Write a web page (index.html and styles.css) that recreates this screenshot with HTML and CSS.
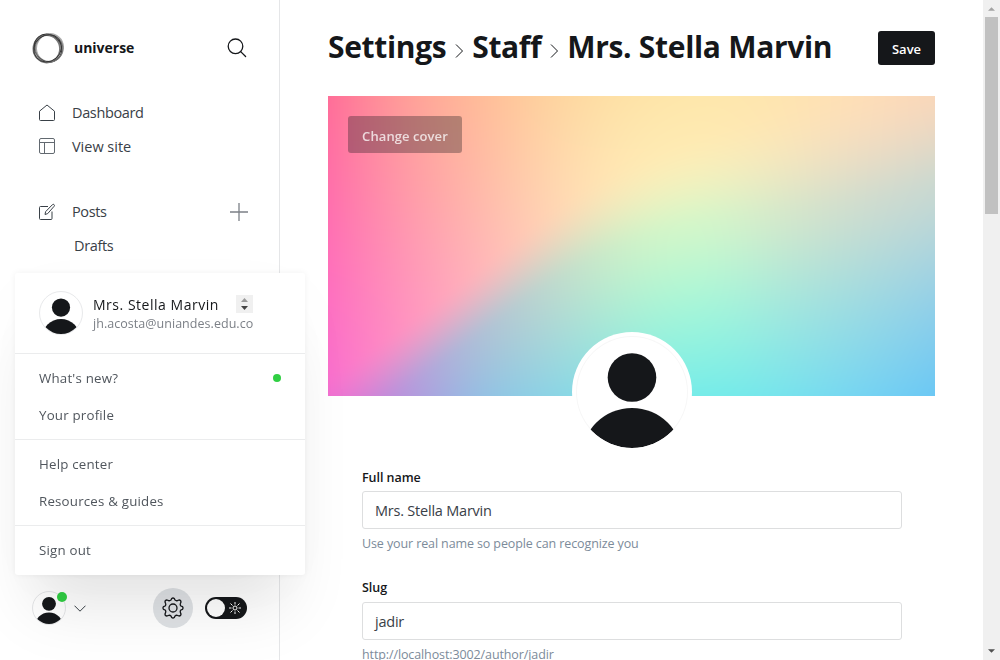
FILE: index.html
```html
<!DOCTYPE html>
<html lang="en">
<head>
<meta charset="utf-8">
<title>Settings - Staff</title>
<link rel="stylesheet" href="styles.css">
</head>
<body>
<svg class="defs" width="0" height="0" aria-hidden="true">
  <symbol id="person" viewBox="0 0 112 112">
    <clipPath id="disc"><circle cx="56" cy="56" r="56"/></clipPath>
    <circle cx="56" cy="41.500" r="24.300"/>
    <circle cx="56" cy="122.700" r="50.700" clip-path="url(#disc)"/>
  </symbol>
</svg>
<div class="app">
  <nav class="sidebar">
    <div class="brand">
      <svg class="logo" viewBox="0 0 32 32" fill="none">
        <ellipse cx="17.300" cy="15" rx="13.300" ry="14" stroke-width="1.800" stroke="#aaa" transform="rotate(30 16 16)"/>
        <ellipse cx="14.700" cy="16.800" rx="13.300" ry="13.700" stroke-width="1.800" stroke="#777"/>
        <ellipse cx="16" cy="16" rx="14.600" ry="13.100" stroke-width="1" stroke="#333" transform="rotate(50 16 16)"/>
        <ellipse cx="17" cy="16.500" rx="13.800" ry="13.700" stroke-width="1.100" stroke="#777"/>
        <ellipse cx="15.500" cy="16" rx="14.500" ry="13" stroke-width=".9" stroke="#333" transform="rotate(-40 16 16)"/>
      </svg>
      <span class="brand-name">universe</span>
      <svg class="search" viewBox="0 0 20 20" fill="none" stroke="#15171a" stroke-width="1.300" stroke-linecap="round"><circle cx="8.500" cy="8.300" r="7.300"/><path d="M13.700 13.600 18.600 18.500"/></svg>
    </div>
    <ul class="nav">
      <li><svg class="icon" viewBox="0 0 18 18"><path d="M1.500 7.200 9 1l7.500 6.200V15.500a1 1 0 0 1-1 1h-13a1 1 0 0 1-1-1z"/></svg><span class="t-dash">Dashboard</span></li>
      <li><svg class="icon gray" viewBox="0 0 18 18"><rect x="1.500" y="1.500" width="15" height="15" rx="1.500"/><path d="M1.500 5.500h15M6.500 5.500v11"/></svg><span class="t-view">View site</span></li>
    </ul>
    <ul class="nav posts">
      <li><svg class="icon" viewBox="0 0 18 18"><path d="M10 3.500H2.500a1 1 0 0 0-1 1v11a1 1 0 0 0 1 1h10.500a1 1 0 0 0 1-1V8.500M7 11.500l.6-2.800L14.400 1.700a1.100 1.100 0 0 1 1.700 1.600L9.700 10.600z"/></svg><span class="t-posts">Posts</span><svg class="plus" viewBox="0 0 18 18"><path d="M9 0v18M0 9h18"/></svg></li>
      <li class="sub"><span class="t-drafts">Drafts</span></li>
    </ul>
    <div class="bottom">
      <div class="mini"><svg class="avatar"><use href="#person"/></svg><i class="dot badge"></i></div>
      <svg class="caret" viewBox="0 0 12 7"><path d="M.5.700 6 6.200 11.500.700"/></svg>
      <div class="gear"><svg viewBox="0 0 22 22" fill="none" stroke="#15171a" stroke-width="1.300" stroke-linejoin="round"><circle cx="11" cy="11" r="4"/><path d="M9 3.100 9.700 1.500Q11 .5 12.300 1.500L13 3.100Q14.200 4.100 15.400 3.600L17 3Q18.900 3 19 5L18.400 6.600Q17.900 7.800 18.900 9L20.500 9.700Q21.500 11 20.500 12.300L18.900 13Q17.900 14.200 18.400 15.400L19 17Q19 18.900 17 19L15.400 18.400Q14.200 17.900 13 18.900L12.300 20.500Q11 21.500 9.700 20.500L9 18.900Q7.800 17.900 6.600 18.400L5 19Q3 19 3 17L3.600 15.400Q4.100 14.200 3.100 13L1.500 12.300Q.5 11 1.500 9.700L3.100 9Q4.100 7.800 3.600 6.600L3 5Q3 3 5 3L6.600 3.600Q7.800 4.100 9 3.100Z"/></svg></div>
      <div class="toggle"><i class="knob"></i><svg viewBox="0 0 12 12" fill="none" stroke="#fff" stroke-width="1"><circle cx="6" cy="6" r="2"/><path d="M6 0v2.500M6 9.500V12M0 6h2.500M9.500 6H12M1.500 1.500l2 2M8.500 8.500l2 2M1.500 10.500l2-2M8.500 3.500l2-2"/></svg></div>
    </div>
  </nav>
  <main class="main">
    <header class="head">
      <h1><span class="h-set">Settings</span><svg class="sep" viewBox="0 0 9 16"><path d="m1 1.500 6.500 6.500L1 14.500"/></svg><span class="h-staff">Staff</span><svg class="sep" viewBox="0 0 9 16"><path d="m1 1.500 6.500 6.500L1 14.500"/></svg><span class="h-name">Mrs. Stella Marvin</span></h1>
      <button class="save">Save</button>
    </header>
    <section class="cover">
      <canvas id="cover" width="607" height="300"></canvas>
      <button class="change"><span>Change cover</span></button>
      <div class="portrait"><svg><use href="#person"/></svg></div>
    </section>
    <form class="form">
      <label class="l-full">Full name</label>
      <div class="field"><span class="t-full">Mrs. Stella Marvin</span></div>
      <p class="h-full">Use your real name so people can recognize you</p>
      <label class="l-slug">Slug</label>
      <div class="field slug"><span class="t-slug">jadir</span></div>
      <p class="h-slug">http://localhost:3002/author/jadir</p>
    </form>
  </main>
  <div class="scrollbar"><svg class="arrow up" viewBox="0 0 8 4"><path d="M0 4h8L4 0z"/></svg><div class="thumb"></div><svg class="arrow down" viewBox="0 0 8 4"><path d="M0 0h8L4 4z"/></svg></div>
</div>
<div class="menu">
  <div class="who">
    <div class="ring"><svg><use href="#person"/></svg></div>
    <div class="id"><div class="name">Mrs. Stella Marvin</div><div class="mail">jh.acosta@uniandes.edu.co</div></div>
    <div class="spinner"><svg viewBox="0 0 17 18"><path fill="#999" d="M5 7h7L8.500 3z"/><path fill="#444" d="M5 11h7l-3.500 4z"/></svg></div>
  </div>
  <div class="group"><a><span class="m1">What's new?</span><i class="dot"></i></a><a><span class="m2">Your profile</span></a></div>
  <div class="group"><a><span class="m3">Help center</span></a><a><span class="m4">Resources &amp; guides</span></a></div>
  <div class="group"><a><span class="m5">Sign out</span></a></div>
</div>
<script src="cover.js"></script>
</body>
</html>
```
FILE: styles.css
```css
* { box-sizing: border-box; margin: 0; padding: 0; }
body { width: 1000px; height: 660px; overflow: hidden; background: #fff; font-family: "Open Sans", "Noto Sans", sans-serif; color: #15171a; }
ul { list-style: none; }
span, label, p, .name, .mail { white-space: nowrap; }
button { border: 0; font-family: inherit; }
.defs { position: absolute; }
.app { display: flex; height: 660px; }

.sidebar { display: flex; flex-direction: column; width: 280px; flex: none; border-right: 1px solid #e5e6e8; padding: 32px 31px 32px 32px; }
.brand { display: flex; align-items: center; height: 32px; }
.logo { width: 32px; height: 32px; }
.brand-name { margin-left: 10px; padding-bottom: 2px; font-size: 14px; font-weight: 700; letter-spacing: -.02px; }
.search { width: 20px; height: 20px; margin-left: auto; margin-right: 1px; }
.nav { margin-top: 32px; }
.nav li { display: flex; align-items: center; height: 34px; padding-left: 6px; font-size: 14.500px; color: #394047; letter-spacing: -.36px; }
.nav span { padding-bottom: 2px; }
.nav .t-view { letter-spacing: -.02px; }
.nav .icon { width: 18px; height: 18px; margin-right: 16px; fill: none; stroke: #394047; stroke-width: 1; stroke-linejoin: round; }
.nav .gray { margin-top: -2px; stroke: #626970; }
.nav .sub { padding-left: 42px; }
.posts { margin-top: 31px; }
.plus { width: 18px; height: 18px; margin-left: auto; stroke: #7c8087; stroke-width: 1.300; }
.bottom { display: flex; align-items: center; height: 40px; margin-top: auto; }
.mini { position: relative; width: 34px; height: 34px; border: 1px solid #e5e6e8; border-radius: 50%; background: #fff; }
.mini svg { display: block; width: 32px; height: 32px; fill: #15171a; }
.dot { display: block; width: 8px; height: 8px; border-radius: 50%; background: #30cf43; }
.badge { position: absolute; right: -2px; top: 0; width: 10px; height: 10px; }
.caret { width: 12px; height: 7px; margin-left: 8px; fill: none; stroke: #394047; }
.gear { display: flex; align-items: center; justify-content: center; width: 40px; height: 40px; margin-left: 67px; border-radius: 50%; background: #dfe2e5; }
.gear svg { width: 22px; height: 22px; }
.toggle { display: flex; align-items: center; width: 42px; height: 22px; margin-left: 12px; padding: 0 6px 0 2px; border-radius: 11px; background: #15171a; justify-content: space-between; }
.knob { width: 18px; height: 18px; border-radius: 50%; background: #fff; }
.toggle svg { width: 12px; height: 12px; }

.main { flex: 1; padding: 0 48px; }
.head { display: flex; align-items: center; justify-content: space-between; height: 96px; }
h1 { display: flex; align-items: center; font-size: 30px; font-weight: 700; line-height: 40px; letter-spacing: -.34px; }
h1 span { padding-bottom: 2px; }
.h-staff { letter-spacing: -.4px; }
.h-name { letter-spacing: -.31px; }
.sep { width: 9px; height: 16px; margin: 5px 8px 0 9px; fill: none; stroke: #15171a; stroke-width: 1; }
.save { width: 57px; height: 34px; padding-top: 1px; border-radius: 3px; background: #15171a; color: #fff; font-size: 13px; font-weight: 600; }
.cover { position: relative; height: 300px; }
#cover { display: block; }
.change { position: absolute; left: 20px; top: 20px; width: 114px; height: 37px; padding-top: 3px; border-radius: 3px; background: rgba(21,23,26,.32); color: #fff; font-size: 13px; font-weight: 600; letter-spacing: .08px; }
.change span { opacity: .75; }
.portrait { position: absolute; left: 244px; top: 236px; width: 120px; height: 120px; padding: 4px; border-radius: 50%; background: #fff; }
.portrait svg { display: block; width: 112px; height: 112px; fill: #15171a; border-radius: 50%; box-shadow: inset 0 0 0 1px #f7f7f7; }
.form { padding: 72px 33px 0 34px; }
label { display: block; height: 20px; margin-bottom: 3px; font-size: 12.500px; line-height: 20px; font-weight: 600; letter-spacing: -.05px; }
.field { display: flex; align-items: center; height: 38px; padding: 1px 12px 0; border: 1px solid #dddedf; border-radius: 3px; color: #394047; font-size: 14.500px; letter-spacing: -.22px; }
.form p { height: 20px; margin: 5px 0 24px; color: #7c8b9a; font-size: 12.500px; line-height: 20px; letter-spacing: -.11px; }
.slug { margin-top: 4px; }
.scrollbar { display: flex; flex-direction: column; align-items: center; width: 17px; background: #f0f0f0; padding: 7px 0; }
.thumb { width: 13px; height: 197px; margin-top: 6px; background: #c1c1c1; }
.arrow { width: 7px; height: 4px; fill: #a3a3a3; }
.down { margin-top: auto; fill: #505050; }

.menu { position: absolute; left: 15px; top: 273px; width: 290px; height: 302px; border-radius: 3px; background: #fff; box-shadow: 0 0 7px rgba(0,0,0,.06), 0 50px 60px -18px rgba(0,0,0,.1), 0 20px 70px rgba(0,0,0,.025); }
.who { display: flex; height: 80px; padding: 18px 24px 0; }
.ring { width: 44px; height: 44px; border: 1px solid #e8e9eb; border-radius: 50%; }
.ring svg { display: block; width: 42px; height: 42px; fill: #15171a; }
.id { width: 126px; margin-left: 10px; padding-top: 4px; }
.name { font-size: 14px; line-height: 20px; font-weight: 500; letter-spacing: .52px; }
.mail { font-size: 12.500px; line-height: 17px; color: #7c8087; letter-spacing: .04px; }
.spinner { width: 17px; height: 18px; margin: 4px 0 0 17px; background: #f0f0f0; }
.spinner svg { display: block; width: 17px; height: 18px; }
.group { border-top: 1px solid #ebeced; padding: 6px 24px; }
.group a { display: flex; align-items: center; justify-content: space-between; height: 37px; font-size: 13.300px; color: #50565d; letter-spacing: .2px; }
.group a span { padding-bottom: 2px; }
.group a .dot { margin-top: -1px; }
.group:nth-child(2), .group:nth-child(3) { height: 86px; }
```
FILE: cover.js
```js
// Two colour fields (warm above, cool below) joined along a soft diagonal edge.
const warm = [
  ['ff6e98','ffa099','ffbc98','fed6a0','fee4a8','fee8ac','fee5b0','fedeb8','fdd7b8'],
  ['ff70ac','ff9aa8','ffbaa8','ffdab2','ffefba','ffefba','ffe6bc','fedcc0','ffd8c0'],
  ['ff70c0','ff94bc','ffb4c0','ffd0c0','fff0c0','ffeec0','ffe6c0','fedcc0','ffd8c0'],
  ['f870d0','ff90c8','ffb0c8','ffd0c8','fff0c0','ffeec0','ffe6c0','fedcc0','ffd8c0']
];
const cool = [
  ['e0a0c0','e0b0c0','e0c8c0','e8dcc0','f8ecbc','f8f0be','f0e8c0','ecdcc4','e4d8c4'],
  ['d8a0c8','d8b0c8','d8c4c4','e0dcbc','eaf4c0','e6f8c4','e6e6c4','dadccb','ccdad0'],
  ['c8a0d0','c8a8d0','c0c0cc','bcdcd0','b4f4d0','a8fcd8','a8e8dc','a0dce0','94d0e8'],
  ['e070d4','b894dc','90c4e4','8ed4e4','7ce8e8','74eee8','78e4ec','78d4f2','6cc8f4']
];
const edge = [310, 262, 205, 145, 102, 76, 62, 50, 28];
const soft = [34, 38, 40, 42, 46, 50, 56, 62, 66];
const rgb = h => [0, 2, 4].map(i => parseInt(h.substr(i, 2), 16));
const W = warm.map(r => r.map(rgb)), C = cool.map(r => r.map(rgb));
// Cubic B-spline through the columns, so that no column line is visible.
const spline = (get, g, n) => {
  const i = Math.min(n - 2, Math.floor(g)), t = g - i;
  const p = k => k < 0 ? 2 * get(0) - get(1) : k >= n ? 2 * get(n - 1) - get(n - 2) : get(k);
  return ((1 - t) ** 3 * p(i - 1) + (3 * t ** 3 - 6 * t * t + 4) * p(i) +
    (-3 * t ** 3 + 3 * t * t + 3 * t + 1) * p(i + 1) + t ** 3 * p(i + 2)) / 6;
};
const cv = document.getElementById('cover');
const ctx = cv.getContext('2d');
const img = ctx.createImageData(607, 300);
for (let x = 0; x < 607; x++) {
  const gx = x / 606 * 8;
  const e = spline(k => edge[k], gx, 9), s = spline(k => soft[k], gx, 9);
  const cols = [W, C].map(F => F.map(row => [0, 1, 2].map(c => spline(k => row[k][c], gx, 9))));
  for (let y = 0; y < 300; y++) {
    const gy = y / 299 * 3;
    let t = Math.max(0, Math.min(1, (y - e + s) / (2 * s)));
    t = t * t * (3 - 2 * t);
    const o = (y * 607 + x) * 4;
    for (let c = 0; c < 3; c++) {
      const a = spline(k => cols[0][k][c], gy, 4), b = spline(k => cols[1][k][c], gy, 4);
      img.data[o + c] = a + (b - a) * t;
    }
    img.data[o + 3] = 255;
  }
}
ctx.putImageData(img, 0, 0);
```
